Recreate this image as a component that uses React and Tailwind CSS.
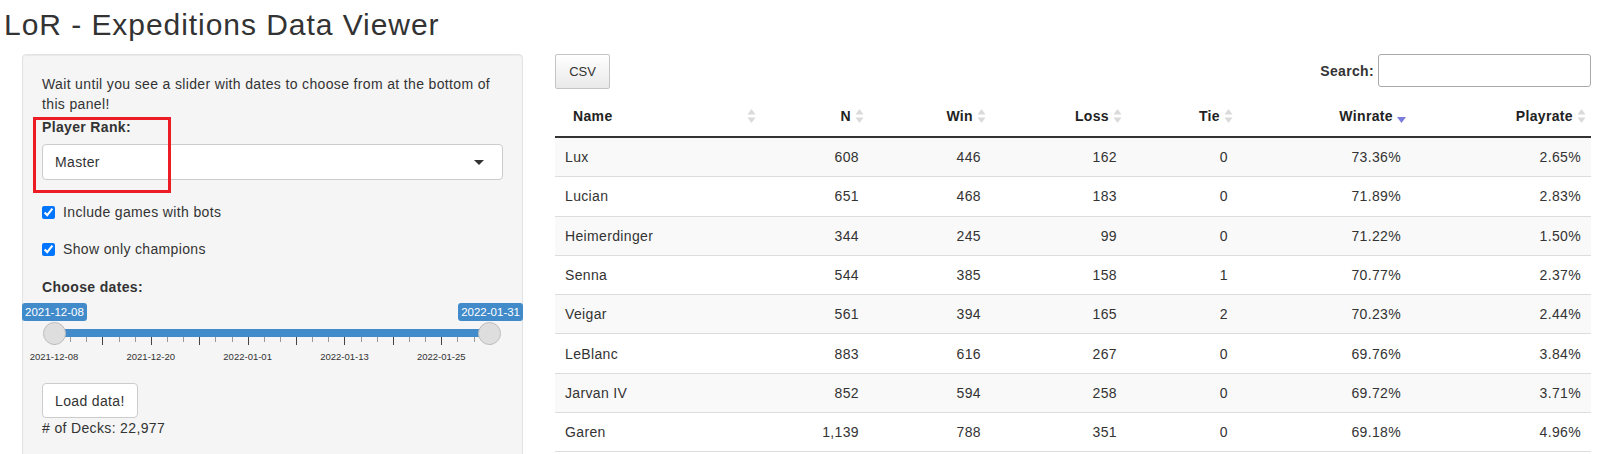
import React from 'react';

const rows = [
  ['Lux', '608', '446', '162', '0', '73.36%', '2.65%'],
  ['Lucian', '651', '468', '183', '0', '71.89%', '2.83%'],
  ['Heimerdinger', '344', '245', '99', '0', '71.22%', '1.50%'],
  ['Senna', '544', '385', '158', '1', '70.77%', '2.37%'],
  ['Veigar', '561', '394', '165', '2', '70.23%', '2.44%'],
  ['LeBlanc', '883', '616', '267', '0', '69.76%', '3.84%'],
  ['Jarvan IV', '852', '594', '258', '0', '69.72%', '3.71%'],
  ['Garen', '1,139', '788', '351', '0', '69.18%', '4.96%'],
];

const columns = [
  { label: 'Name', w: 'w-[206px]', left: true },
  { label: 'N', w: 'w-[108px]' },
  { label: 'Win', w: 'w-[122px]' },
  { label: 'Loss', w: 'w-[136px]' },
  { label: 'Tie', w: 'w-[111px]' },
  { label: 'Winrate', w: 'w-[173px]', desc: true },
  { label: 'Playrate', w: 'w-[180px]' },
];

function SortBoth() {
  return (
    <svg width="9" height="15" viewBox="0 0 9 15" className="absolute right-[5px] top-1/2 -translate-y-1/2">
      <polygon points="4.5,0.5 8.5,6 0.5,6" fill="#dadada" />
      <polygon points="0.5,9 8.5,9 4.5,14.5" fill="#dadada" />
    </svg>
  );
}

function SortDesc() {
  return (
    <svg width="9" height="6" viewBox="0 0 9 6" className="absolute right-[5px] top-[21px]">
      <polygon points="0,0 9,0 4.5,6" fill="#7b7bdc" />
    </svg>
  );
}

// slider geometry (px, relative to the slider box)
const BAR_LEFT = 32;
const BAR_W = 435.7;
const DAYS = 54;

function DateSlider() {
  const ticks = Array.from({ length: 28 }, (_, i) => i);
  const labels = [
    [0, '2021-12-08'],
    [12, '2021-12-20'],
    [24, '2022-01-01'],
    [36, '2022-01-13'],
    [48, '2022-01-25'],
  ];
  return (
    <div className="relative -mx-[20px] mt-[6px] h-[60px] tracking-normal">
      <div className="absolute left-0 top-0 h-[18px] rounded-[3px] bg-[#428bca] px-[3px] text-[11.5px] leading-[18px] text-white">
        2021-12-08
      </div>
      <div className="absolute right-0 top-0 h-[18px] rounded-[3px] bg-[#428bca] px-[3px] text-[11.5px] leading-[18px] text-white">
        2022-01-31
      </div>
      <div className="absolute left-[32px] top-[26px] h-[8px] w-[436px] bg-[#428bca]" />
      {ticks.map((i) => {
        const major = i % 3 === 0;
        return (
          <div
            key={i}
            className={major ? 'absolute top-[34px] h-[8px] w-px bg-[#444]' : 'absolute top-[34px] h-[5px] w-px bg-[#999]'}
            style={{ left: BAR_LEFT + (i * BAR_W) / 27 }}
          />
        );
      })}
      {labels.map(([d, t]) => (
        <div
          key={t}
          className="absolute top-[48px] -translate-x-1/2 text-[9.5px] leading-[12px] text-[#333]"
          style={{ left: BAR_LEFT + (d * BAR_W) / DAYS }}
        >
          {t}
        </div>
      ))}
      <div className="absolute left-[21px] top-[19px] h-[23px] w-[23px] rounded-full border border-[#bdbdbd] bg-[#dedede]" />
      <div className="absolute left-[456px] top-[19px] h-[23px] w-[23px] rounded-full border border-[#bdbdbd] bg-[#dedede]" />
    </div>
  );
}

export default function App() {
  return (
    <div className="h-[454px] w-[1600px] overflow-hidden bg-white font-['Liberation_Sans',Arial,sans-serif] text-sm leading-5 tracking-[0.35px] text-[#333]">
      <h2 className="ml-[4px] mt-[8px] text-[30px] font-normal leading-[33px] tracking-[0.95px]">LoR - Expeditions Data Viewer</h2>

      <div className="mt-[13px] flex items-start">
        {/* Sidebar panel */}
        <div className="relative ml-[22px] h-[480px] w-[501px] shrink-0 rounded border border-[#e3e3e3] bg-[#f5f5f5] px-[19px] pt-[19px] shadow-[inset_0_1px_1px_rgba(0,0,0,0.05)]">
          <p>Wait until you see a slider with dates to choose from at the bottom of this panel!</p>
          <label className="mt-[3px] block font-bold">Player Rank:</label>
          <div className="relative mt-[7px] flex h-[36px] items-center rounded border border-[#ccc] bg-white pl-3">
            <span>Master</span>
            <span className="absolute right-[18px] top-[15px] h-0 w-0 border-x-[5px] border-t-[5px] border-x-transparent border-t-[#333]" />
          </div>
          <label className="mt-[22px] flex h-5 items-center gap-[8px]">
            <input type="checkbox" checked readOnly className="m-0 h-[13px] w-[13px]" />
            <span>Include games with bots</span>
          </label>
          <label className="mt-[17px] flex h-5 items-center gap-[8px]">
            <input type="checkbox" checked readOnly className="m-0 h-[13px] w-[13px]" />
            <span>Show only champions</span>
          </label>
          <label className="mt-[18px] block font-bold">Choose dates:</label>
          <DateSlider />
          <button className="mt-[20px] h-[35px] rounded border border-[#ccc] bg-white px-3 text-[#333]">Load data!</button>
          <div>
            # of Decks: 22,977
          </div>

          {/* annotation box */}
          <div className="absolute left-[10px] top-[62px] h-[76px] w-[138px] border-[3px] border-[#ed1c24]" />
        </div>

        {/* Main panel */}
        <div className="ml-[32px] w-[1036px] shrink-0">
          <div className="flex h-[35px] items-start justify-between">
            <button className="h-[35px] w-[55px] rounded-[2px] border border-[#c4c4c4] bg-linear-to-b from-white to-[#e9e9e9] text-[13px] tracking-normal text-[#333]">
              CSV
            </button>
            <div className="flex h-[33px] items-center">
              <label className="mr-[4px] font-bold">Search:</label>
              <input className="h-[33px] w-[213px] rounded-[3px] border border-[#aaa] bg-white" />
            </div>
          </div>

          <table className="mt-[7px] w-full table-fixed border-separate border-spacing-0">
            <colgroup>
              {columns.map((c) => (
                <col key={c.label} className={c.w} />
              ))}
            </colgroup>
            <thead>
              <tr>
                {columns.map((c) => (
                  <th
                    key={c.label}
                    className={`relative border-b-2 border-[#333] px-[18px] py-[10px] font-bold text-[#222] ${c.left ? 'text-left' : 'text-right'}`}
                  >
                    {c.label}
                    {c.desc ? <SortDesc /> : <SortBoth />}
                  </th>
                ))}
              </tr>
            </thead>
            <tbody>
              {rows.map((r, i) => (
                <tr key={r[0]} className={i % 2 === 0 ? 'bg-[#f9f9f9]' : 'bg-white'}>
                  {r.map((v, j) => (
                    <td
                      key={j}
                      className={`px-[10px] py-[9.15px] ${i > 0 ? 'border-t border-[#ddd]' : ''} ${i === rows.length - 1 ? 'border-b border-[#ddd]' : ''} ${j === 0 ? 'text-left' : 'text-right'}`}
                    >
                      {v}
                    </td>
                  ))}
                </tr>
              ))}
            </tbody>
          </table>
        </div>
      </div>
    </div>
  );
}
